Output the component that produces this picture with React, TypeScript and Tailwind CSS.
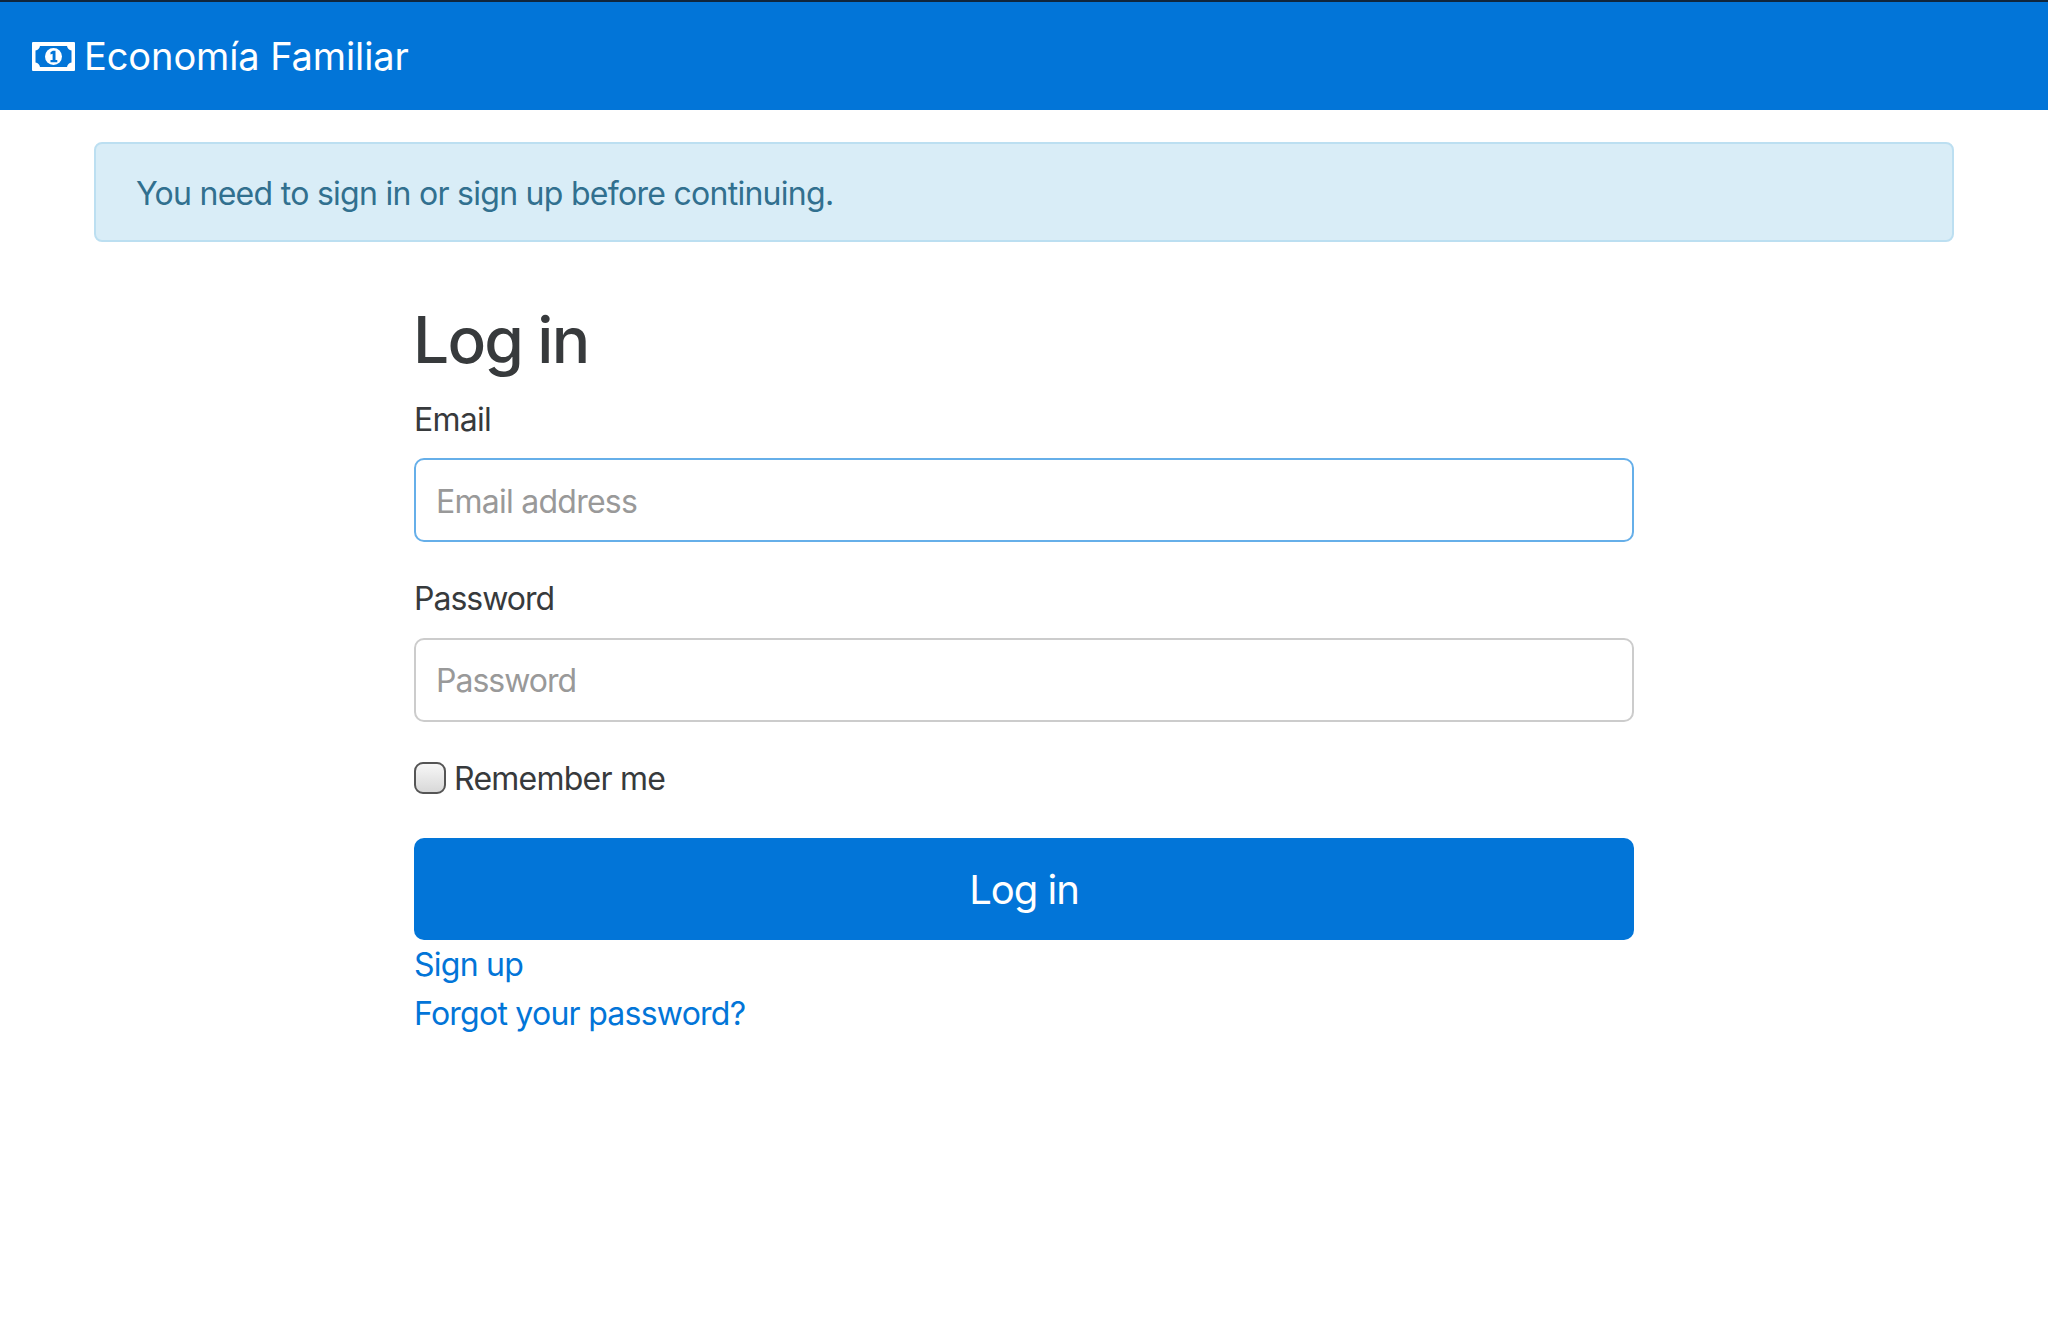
import React from 'react';

const MoneyIcon = () => (
    <svg viewBox="0 0 43 29" className="w-[43px] h-[29px] shrink-0" aria-hidden="true">
        <path
            fill="#ffffff"
            fillRule="evenodd"
            d="M1 0h41a1 1 0 0 1 1 1v27a1 1 0 0 1-1 1H1a1 1 0 0 1-1-1V1a1 1 0 0 1 1-1zM8 4C7.500 6.500 6 8 3.500 8.500v12c2.500.5 4 2 4.500 4.500h27c.5-2.500 2-4 4.500-4.500v-12C37 8 35.500 6.500 35 4z"
        />
        <circle cx="21.500" cy="14.500" r="8.500" fill="#ffffff" />
        <path
            fill="#0275d8"
            d="M20.800 8.800h2.700v9.200h1.800v2.200h-6.800v-2.200h2.100v-6.300l-2.100.7v-2.100z"
        />
    </svg>
);

export default function App() {
    return (
        <div className="min-h-[1321px] bg-white font-['Inter',sans-serif] text-[#373a3c]">
            <nav className="h-[110px] flex items-center px-8 bg-[#0275d8] border-t-2 border-[#10263c]">
                <a href="#" className="flex items-center gap-[9px] text-white text-[38px] leading-none tracking-[-0.1px]">
                    <MoneyIcon />
                    <span>Economía Familiar</span>
                </a>
            </nav>

            <main className="px-[94px] pt-8">
                <div className="h-[100px] flex items-center pl-[40px] pr-[42px] pt-[3px] bg-[#d9edf7] border-2 border-[#bcdff1] rounded-lg text-[#31708f] text-[32px] tracking-[-0.72px]">
                    You need to sign in or sign up before continuing.
                </div>

                <form className="w-[1220px] mx-auto mt-[60px]" onSubmit={(e) => e.preventDefault()}>
                    <h2 className="-ml-[1px] text-[64px] leading-[76px] font-medium tracking-[-1.8px]">Log in</h2>

                    <label className="block mt-[22px] text-[32px] leading-[40px] tracking-[-0.75px]">Email</label>
                    <input
                        type="email"
                        placeholder="Email address"
                        className="block w-full h-[84px] mt-[18px] px-[20px] pt-[2px] text-[32px] tracking-[-0.75px] border-2 border-[#66afe9] rounded-[10px] outline-none placeholder:text-[#999999]"
                    />

                    <label className="block mt-[37px] text-[32px] leading-[40px] tracking-[-1px]">Password</label>
                    <input
                        type="password"
                        placeholder="Password"
                        className="block w-full h-[84px] mt-[19px] px-[20px] text-[32px] tracking-[-1px] border-2 border-[#cccccc] rounded-[10px] outline-none placeholder:text-[#999999]"
                    />

                    <label className="flex items-center gap-[8px] mt-[35px] text-[32px] leading-[40px] tracking-[-0.75px]">
                        <span className="w-[32px] h-[32px] rounded-[9px] border-2 border-[#555555] bg-gradient-to-b from-[#f7f7f7] to-[#d8d8d8]"></span>
                        <span className="pt-[2px]">Remember me</span>
                    </label>

                    <button className="block w-full h-[102px] mt-[39px] pt-[2px] bg-[#0275d8] text-white text-[40px] tracking-[-1px] rounded-[10px]">
                        Log in
                    </button>

                    <div className="text-[32px] leading-[49px] tracking-[-0.75px] text-[#0275d8]">
                        <a href="#" className="block">Sign up</a>
                        <a href="#" className="block">Forgot your password?</a>
                    </div>
                </form>
            </main>
        </div>
    );
}
